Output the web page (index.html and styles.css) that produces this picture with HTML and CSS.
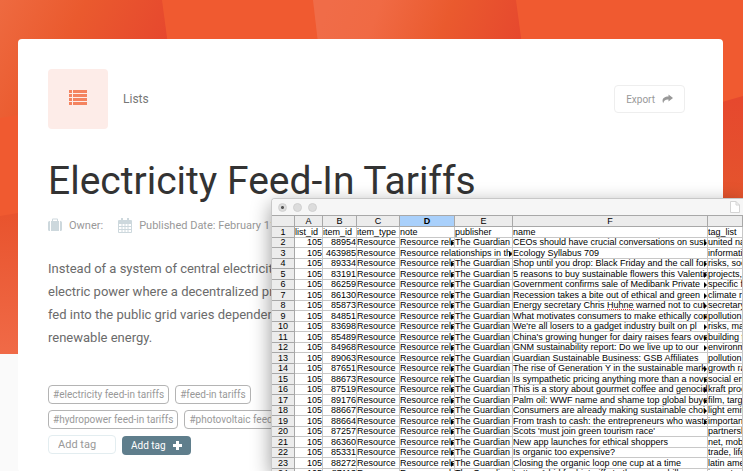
FILE: index.html
```html
<!DOCTYPE html>
<html lang="en">
<head>
<meta charset="utf-8">
<title>Electricity Feed-In Tariffs</title>
<link rel="stylesheet" href="styles.css">
</head>
<body>
<svg class="backdrop" viewBox="0 0 743 354" preserveAspectRatio="none" aria-hidden="true">
  <defs>
    <linearGradient id="g1" gradientUnits="userSpaceOnUse" x1="0" y1="0" x2="150" y2="80">
      <stop offset="0" stop-color="#ee6a40"/><stop offset=".45" stop-color="#ea5a2e"/><stop offset="1" stop-color="#e6472e"/>
    </linearGradient>
    <linearGradient id="g2" gradientUnits="userSpaceOnUse" x1="330" y1="0" x2="510" y2="70">
      <stop offset="0" stop-color="#f06c48"/><stop offset=".25" stop-color="#f06a44"/><stop offset=".6" stop-color="#ea5a2e"/><stop offset="1" stop-color="#e6482e"/>
    </linearGradient>
    <linearGradient id="g3" x1="0" y1="0" x2="0" y2="1">
      <stop offset="0" stop-color="#e8532d"/><stop offset="1" stop-color="#f06a47"/>
    </linearGradient>
    <linearGradient id="g4" x1="0" y1="0" x2="0" y2="1">
      <stop offset="0" stop-color="#e6482e"/><stop offset="1" stop-color="#e4572d"/>
    </linearGradient>
  </defs>
  <path fill="#f05a30" d="M0 0H743V354H0z"/>
  <path fill="url(#g1)" d="M0 0H162L170 60 18 115 0 118z"/>
  <path fill="url(#g2)" d="M313 0H516L524 60H320z"/>
  <path fill="url(#g3)" d="M0 216L30 211V354H0z"/>
  <path fill="url(#g4)" d="M715 104L743 96V220H715z"/>
</svg>
<main class="card">
  <header class="card-head">
    <span class="badge">
      <svg width="18" height="18" viewBox="0 0 18 18" fill="#f4835f" aria-hidden="true"><path d="M0 0h3v3H0zM4 0h14v3H4zM0 4h3v3H0zM4 4h14v3H4zM0 8h3v3H0zM4 8h14v3H4zM0 12h3v3H0zM4 12h14v3H4z"/></svg>
    </span>
    <span class="kind">Lists</span>
    <button class="export" type="button">Export
      <svg width="11" height="10" viewBox="0 0 11 10" fill="#999" aria-hidden="true"><path d="M6.500 .5L11 4 6.500 7.500V5.400C3.500 5.200 1.700 6.300 1.200 9.300-.6 5.500 1.500 2.500 6.500 2.500z"/></svg>
    </button>
  </header>
  <h1>Electricity Feed-In Tariffs</h1>
  <div class="meta">
    <svg width="14" height="14" viewBox="0 0 14 14" fill="#cdd8dd" aria-hidden="true"><path d="M3 3H4V1.500Q4 .5 5 .5H9Q10 .5 10 1.500V3H11V13H3zM5 1.500V3H9V1.500zM2 3V13H1.500Q0 13 0 11.500V4.500Q0 3 1.500 3zM12 3V13h.5Q14 13 14 11.500V4.500Q14 3 12.500 3z" fill-rule="evenodd"/></svg>
    <span class="owner">Owner:</span>
    <svg width="14" height="15" viewBox="0 0 14 15" fill="none" stroke="#cdd8dd" aria-hidden="true"><path d="M.5 2.500H13.500V14.500H.5zM.5 5.500H13.500M.5 8.500H13.500M.5 11.500H13.500M4 5V14M7 5V14M10 5V14"/><path stroke-width="2" d="M1 4H13M4 0V4M10 0V4"/></svg>
    <span>Published Date: February 11</span>
  </div>
  <p class="summary">Instead of a system of central electricit<br>electric power where a decentralized pr<br>fed into the public grid varies dependen<br>renewable energy.</p>
  <div class="tags">
    <a href="#electricity">#electricity feed-in tariffs</a>
    <a href="#feed-in">#feed-in tariffs</a>
  </div>
  <div class="tags">
    <a href="#hydropower">#hydropower feed-in tariffs</a>
    <a href="#photovoltaic">#photovoltaic feed</a>
  </div>
  <form class="add">
    <input type="text" placeholder="Add tag" aria-label="Add tag">
    <button type="button">Add tag
      <svg width="9" height="9" viewBox="0 0 9 9" fill="#fff" aria-hidden="true"><path d="M3 0h3v3h3v3H6v3H3V6H0V3h3z"/></svg>
    </button>
  </form>
</main>
<section class="window" aria-label="Spreadsheet">
  <div class="titlebar">
    <i class="dot edited"></i><i class="dot"></i><i class="dot"></i>
    <svg class="doc" width="10" height="12" viewBox="0 0 10 12" fill="#fff" stroke="#d4d4d4" aria-hidden="true"><path d="M.5.5H6L9.500 4V11.500H.5zM6 .5V4H9.500"/></svg>
  </div>
  <table>
    <colgroup><col class="w-row"><col class="w-a"><col class="w-b"><col class="w-c"><col class="w-d"><col class="w-e"><col class="w-f"><col></colgroup>
    <thead><tr><th></th><th>A</th><th>B</th><th>C</th><th class="active">D</th><th>E</th><th>F</th><th></th></tr></thead>
    <tbody id="rows"></tbody>
  </table>
</section>
<script src="sheet.js"></script>
</body>
</html>
```
FILE: styles.css
```css
* { box-sizing: border-box; }
body { margin: 0; height: 100vh; overflow: hidden; position: relative; background: #fafafa; font-family: Roboto, sans-serif; color: #6b6b6b; }
.backdrop { position: absolute; top: 0; left: 0; width: 100%; height: 354px; }
.card { position: relative; margin: 39px 20px 0 18px; padding: 30px 38px 17px 30px; background: #fff; border-radius: 4px; }
.card-head { display: flex; align-items: center; }
.badge { display: flex; align-items: center; justify-content: center; width: 60px; height: 60px; border-radius: 4px; background: #fdece8; }
.kind { margin-left: 15px; font-size: 12px; color: #777; }
.export { display: flex; align-items: center; gap: 7px; margin-left: auto; height: 28px; padding: 0 11px; border: 1px solid #eee; border-radius: 4px; background: #fff; font: 10px Roboto, sans-serif; color: #999; }
h1 { margin: 28px 0 0; font-size: 39px; line-height: 48px; font-weight: 400; color: #333; white-space: nowrap; }
.meta { display: flex; align-items: center; margin-top: 12px; height: 16px; font-size: 11px; color: #999; white-space: nowrap; }
.meta span { margin-left: 7px; }
.meta .owner { margin-right: 15px; }
.summary { margin: 24px 0 0; font-size: 13px; line-height: 23px; color: #6b6b6b; white-space: nowrap; }
.tags { display: flex; gap: 6px; margin-top: 6px; white-space: nowrap; }
.summary + .tags { margin-top: 36px; }
.tags a { height: 19px; padding: 0 4px; border: 1px solid #b4b4b4; border-radius: 4px; font-size: 10px; line-height: 17px; color: #999; text-decoration: none; }
.add { display: flex; align-items: flex-start; gap: 6px; margin-top: 6px; }
.add input { width: 68px; height: 19px; padding: 0 9px; border: 1px solid #e3edf0; border-radius: 4px; background: #fff; font: 11px Roboto, sans-serif; color: #999; }
.add input::placeholder { color: #999; }
.add button { display: flex; align-items: center; gap: 7px; height: 19px; margin-top: 1px; padding: 0 9px; border: 0; border-radius: 4px; background: #5f7e8c; font: 10px Roboto, sans-serif; color: #fff; }
.window { position: absolute; top: 198px; left: 271px; right: 0; bottom: 0; overflow: hidden; background: #fff; border: solid #c8c8c8; border-width: 1px 0 0 1px; border-radius: 4px 0 0 0; box-shadow: 0 6px 20px rgba(0, 0, 0, .4); }
.titlebar { display: flex; align-items: center; gap: 6px; height: 16px; padding: 0 3px 0 6px; background: #f6f6f6; }
.dot { width: 9px; height: 9px; border: 1px solid #d0d0d0; border-radius: 50%; background: #dcdcdc; }
.edited { background: radial-gradient(circle, #555 1px, #dcdcdc 2px); }
.doc { margin-left: auto; }
table { width: 100%; table-layout: fixed; border-collapse: separate; border-spacing: 0; font: 9px/9px "Liberation Sans", sans-serif; color: #000; }
.w-row { width: 23px; }
.w-a { width: 28px; }
.w-b { width: 34px; }
.w-c { width: 43px; }
.w-d { width: 55px; }
.w-e { width: 58px; }
.w-f { width: 195px; }
th, td { height: 11px; padding: 0; border: solid #c8c8c8; border-width: 0 1px 1px 0; font-weight: 400; }
tr:nth-child(even) > * { height: 10px; }
th { text-align: center; background: #ececec; border-color: #a8a8a8; }
thead th { height: 12px; border-top-width: 1px; }
th.active { background: #a9d0fb; font-weight: 700; }
td div { position: relative; height: 9px; overflow: hidden; white-space: nowrap; }
.num { text-align: right; }
.more::after { content: ""; position: absolute; right: 0; top: 2px; border: solid transparent; border-width: 3px 0 3px 3px; border-left-color: #000; }
.typo { display: inline-block; height: 9px; vertical-align: top; border-bottom: 1px dotted #e33; }
```
FILE: sheet.js
```js
// item_id, name, tag_list, whether the name is cut off
const items = [
  [88954, "CEOs should have crucial conversations on sust", "united na", 1],
  [463985, "Ecology Syllabus 709", "informati", 0],
  [89334, "Shop until you drop: Black Friday and the call for", "risks, soc", 1],
  [83191, "5 reasons to buy sustainable flowers this Valentin", "projects, ", 1],
  [86259, "Government confirms sale of Medibank Private ", "specific f", 1],
  [86130, "Recession takes a bite out of ethical and green ", "climate r", 1],
  [85873, "Energy secretary Chris <span class='typo'>Huhne</span> warned not to cut", "secretary", 1],
  [84851, "What motivates consumers to make ethically con", "pollution,", 1],
  [83698, "We're all losers to a gadget industry built on pl", "risks, ma", 1],
  [85489, "China's growing hunger for dairy raises fears ove", "building t", 1],
  [84968, "GNM sustainability report: Do we live up to our ", "environm", 1],
  [89063, "Guardian Sustainable Business: GSB Affiliates", "pollution", 0],
  [87651, "The rise of Generation Y in the sustainable mark", "growth ra", 1],
  [88673, "Is sympathetic pricing anything more than a nove", "social en", 1],
  [87519, "This is a story about gourmet coffee and genocid", "kraft proc", 1],
  [89176, "Palm oil: WWF name and shame top global buye", "film, targ", 1],
  [88667, "Consumers are already making sustainable choi", "light emit", 1],
  [88664, "From trash to cash: the entrepreneurs who waste", "important", 1],
  [87257, "Scots 'must join green tourism race'", "partnersh", 0],
  [86360, "New app launches for ethical shoppers", "net, mob", 0],
  [85331, "Is organic too expensive?", "trade, life", 0],
  [88272, "Closing the organic loop one cup at a time", "latin ame", 0],
  [87113, "Letter: A bid for biotariffs to the energy bill", "important", 0]
];
const cell = (text, cls = "") => `<td><div class="${cls}">${text}</div></td>`;
const wide = text => `<td colspan="2"><div class="more">${text}</div></td>`;
let html = "<tr><th>1</th>" + ["list_id", "item_id", "item_type", "note", "publisher", "name", "tag_list"].map(t => cell(t)).join("") + "</tr>";
items.forEach(([id, name, tags, cut], i) => {
  html += `<tr><th>${i + 2}</th>` + cell(105, "num") + cell(id, "num") + cell("Resource") +
    (i === 1 ? wide("Resource relationships in the") : cell("Resource rela", "more") + cell("The Guardian")) +
    cell(name, cut ? "more" : "") + cell(tags) + "</tr>";
});
document.getElementById("rows").innerHTML = html;
```
